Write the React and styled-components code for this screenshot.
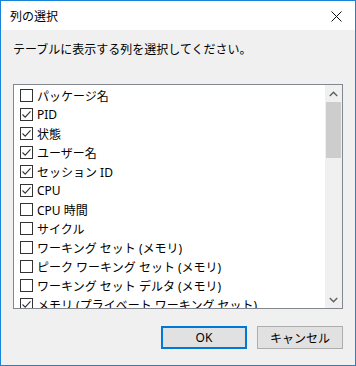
import React from 'react'
import styled, { createGlobalStyle } from 'styled-components'

const GlobalStyle = createGlobalStyle`
  html, body {
    margin: 0;
    padding: 0;
    background: #ffffff;
  }
  body {
    font-family: 'Noto Sans', 'Noto Sans CJK JP', sans-serif;
  }
`

const columns = [
  { label: 'パッケージ名', checked: false },
  { label: 'PID', checked: true },
  { label: '状態', checked: true },
  { label: 'ユーザー名', checked: true },
  { label: 'セッション ID', checked: true },
  { label: 'CPU', checked: true },
  { label: 'CPU 時間', checked: false },
  { label: 'サイクル', checked: false },
  { label: 'ワーキング セット (メモリ)', checked: false },
  { label: 'ピーク ワーキング セット (メモリ)', checked: false },
  { label: 'ワーキング セット デルタ (メモリ)', checked: false },
  { label: 'メモリ (プライベート ワーキング セット)', checked: true },
]

const CheckBox = ({ checked }) => (
  <Box>
    {checked && (
      <svg width='11' height='11' viewBox='0 0 11 11'>
        <path d='M1.5 5.5 L4.2 8.2 L9.5 2.3' fill='none' stroke='#333' strokeWidth='1.1' />
      </svg>
    )}
  </Box>
)

export default function App() {
  return (
    <>
      <GlobalStyle />
      <Window>
        <TitleBar>
          <Title>列の選択</Title>
          <CloseButton>
            <svg width='11' height='11' viewBox='0 0 11 11'>
              <path d='M0.5 0.5 L10.5 10.5 M10.5 0.5 L0.5 10.5' stroke='#111' strokeWidth='1' />
            </svg>
          </CloseButton>
        </TitleBar>
        <Body>
          <Instruction>テーブルに表示する列を選択してください。</Instruction>
          <ListBox>
            <Items>
              {columns.map((c) => (
                <Item key={c.label}>
                  <CheckBox checked={c.checked} />
                  <span>{c.label}</span>
                </Item>
              ))}
            </Items>
            <ScrollBar>
              <Arrow>
                <svg width='9' height='6' viewBox='0 0 9 6'>
                  <path d='M0.8 5 L4.5 1.3 L8.2 5' fill='none' stroke='#606060' strokeWidth='1.4' />
                </svg>
              </Arrow>
              <Track>
                <Thumb />
              </Track>
              <Arrow>
                <svg width='9' height='6' viewBox='0 0 9 6'>
                  <path d='M0.8 1 L4.5 4.7 L8.2 1' fill='none' stroke='#606060' strokeWidth='1.4' />
                </svg>
              </Arrow>
            </ScrollBar>
          </ListBox>
          <Buttons>
            <Button $default>OK</Button>
            <Button>キャンセル</Button>
          </Buttons>
        </Body>
      </Window>
    </>
  )
}

const Window = styled.div`
  width: 356px;
  height: 366px;
  box-sizing: border-box;
  border: 1px solid #1883d7;
  display: flex;
  flex-direction: column;
  background: #f0f0f0;
  overflow: hidden;
`

const TitleBar = styled.div`
  height: 29px;
  background: #ffffff;
  display: flex;
  align-items: center;
  justify-content: space-between;
  padding: 0 9px 0 9px;
`

const Title = styled.div`
  font-size: 12px;
  color: #000;
  margin-top: 1px;
`

const CloseButton = styled.div`
  width: 20px;
  display: flex;
  justify-content: center;
  align-items: center;
  margin-top: 1px;
`

const Body = styled.div`
  flex: 1;
  padding: 12px 12px 0 12px;
  display: flex;
  flex-direction: column;
`

const Instruction = styled.div`
  font-size: 12px;
  line-height: 16px;
  color: #000;
`

const ListBox = styled.div`
  margin-top: 26px;
  height: 225px;
  box-sizing: border-box;
  border: 1px solid #828790;
  background: #fff;
  display: flex;
  overflow: hidden;
`

const Items = styled.div`
  flex: 1;
  padding: 1px 0 0 6px;
  overflow: hidden;
`

const Item = styled.div`
  height: 19px;
  flex-shrink: 0;
  display: flex;
  align-items: center;
  gap: 4px;
  font-size: 12px;
  color: #000;
  white-space: nowrap;
`

const Box = styled.div`
  width: 13px;
  height: 13px;
  box-sizing: border-box;
  border: 1px solid #333;
  background: #fff;
  display: flex;
  align-items: center;
  justify-content: center;
  flex-shrink: 0;
`

const ScrollBar = styled.div`
  width: 17px;
  background: #f0f0f0;
  display: flex;
  flex-direction: column;
`

const Arrow = styled.div`
  height: 17px;
  display: flex;
  align-items: center;
  justify-content: center;
`

const Track = styled.div`
  flex: 1;
  padding: 0 1px;
`

const Thumb = styled.div`
  height: 56px;
  background: #cdcdcd;
`

const Buttons = styled.div`
  margin-top: 17px;
  display: flex;
  justify-content: flex-end;
  gap: 10px;
`

const Button = styled.div`
  width: 86px;
  height: 23px;
  box-sizing: border-box;
  background: #e1e1e1;
  border: ${(p) => (p.$default ? '2px solid #0078d7' : '1px solid #adadad')};
  display: flex;
  align-items: center;
  justify-content: center;
  font-size: 12px;
  color: #000;
`
